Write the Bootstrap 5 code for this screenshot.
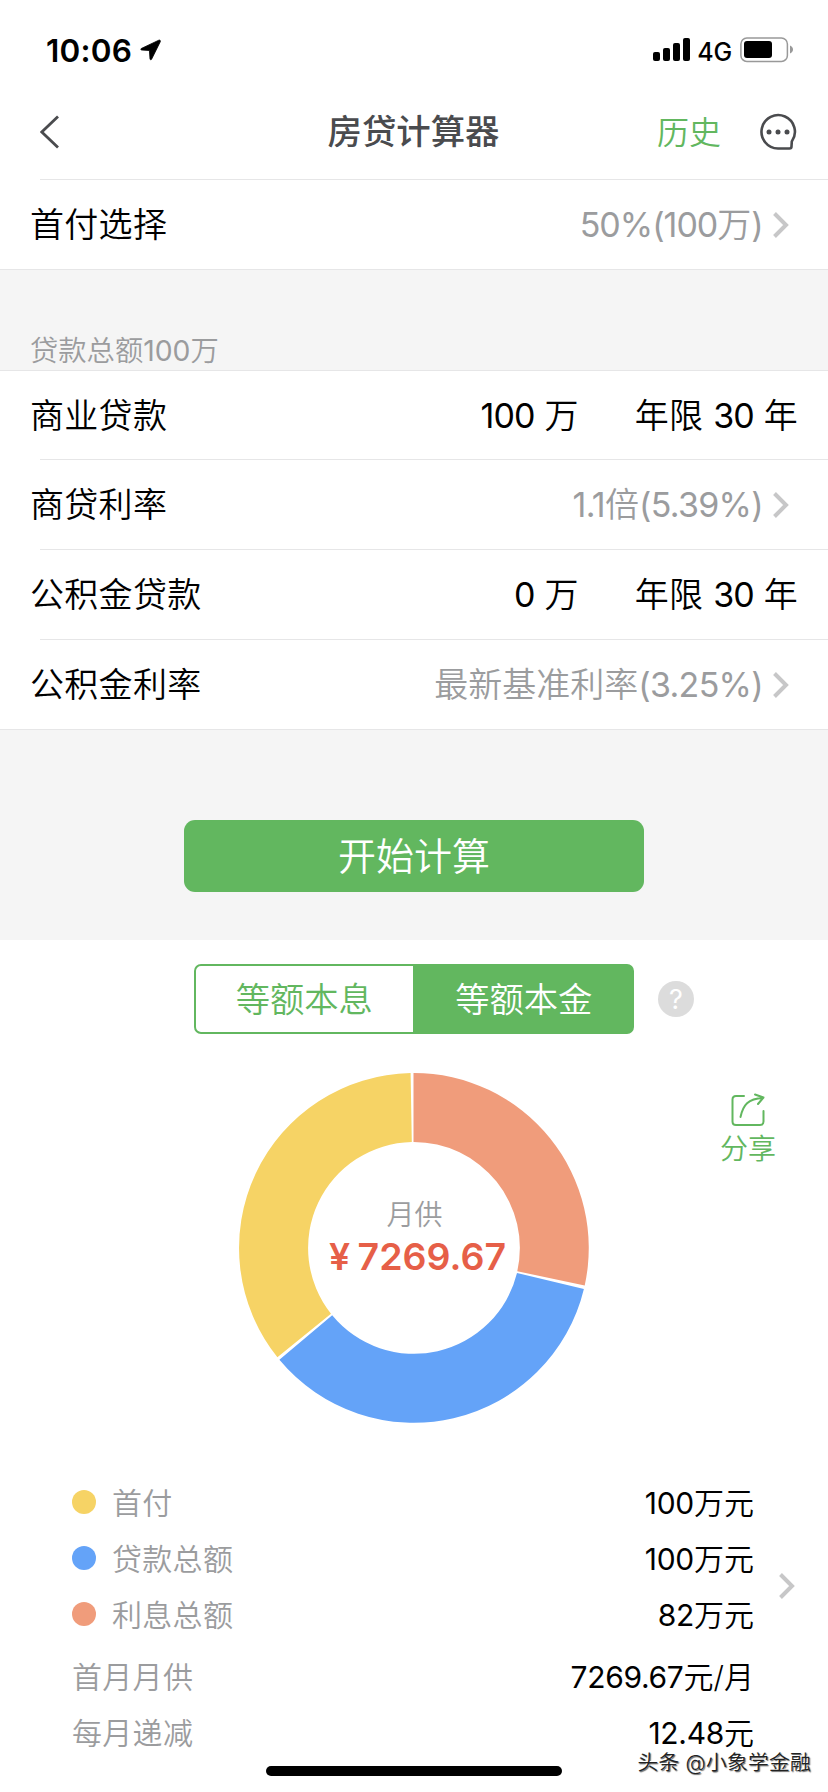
<!DOCTYPE html>
<html lang="zh-CN">
<head>
<meta charset="utf-8">
<meta name="viewport" content="width=device-width, initial-scale=1">
<title>房贷计算器</title>
<link href="https://cdn.jsdelivr.net/npm/bootstrap@5.3.0/dist/css/bootstrap.min.css" rel="stylesheet">
<style>
  :root { --green:#62b75f; --line:#e6e6e7; --grey:#9b9c9e; }
  body { font-family: Inter, "Noto Sans CJK SC", sans-serif; font-weight:350; font-size:34px; line-height:1; color:#000; background:#fff; overflow:hidden; }
  .screen { width:828px; height:1792px; overflow:hidden; }
  svg { display:block; flex:none; }
  .statusbar { height:88px; padding:20px 34px 8px 46px; }
  .clock { font-size:31.5px; font-weight:600; letter-spacing:.2px; padding-top:1px; }
  .network { font-size:25px; font-weight:500; letter-spacing:-.2px; padding-top:4px; margin-left:7px; }
  .titlebar { height:91px; padding:0 31px 4px 40px; }
  .titlebar h1 { font-size:34.4px; font-weight:500; color:#4a4b4e; line-height:1; left:0; right:1px; padding-top:2px; }
  .history { font-size:32px; color:var(--green); text-decoration:none; padding-top:2px; }
  .inset-line { height:1px; margin-left:40px; background:var(--line); }
  .item { height:89px; padding:1px 30px 0 30px; letter-spacing:.3px; }
  .item.first { height:88px; }
  .digits { font-weight:400; letter-spacing:-.9px; }
  .picked { color:var(--grey); margin-right:10px; letter-spacing:0; }
  .picked .digits { letter-spacing:-.7px; }
  .picked .pct { letter-spacing:-1px; }
  .arrowed { padding-right:39px; }
  .years { margin-left:56px; }
  .grey-band { background:#f5f5f5; }
  .band-head { height:102px; border-top:1px solid var(--line); border-bottom:1px solid var(--line); padding:0 30px 5px; font-size:28.300px; color:var(--grey); }
  .band-head .digits { letter-spacing:0; }
  .band-go { height:211px; border-top:1px solid var(--line); padding-top:90px; }
  .go { width:460px; height:72px; border-radius:11px; background:var(--green); color:#fff; font-size:38px; font-weight:350; line-height:1; padding:0; border:0; }
  .seg-row { padding:24px 134px 0 194px; }
  .seg { width:440px; height:70px; }
  .seg .btn { font-size:34.300px; font-weight:350; line-height:1; padding:2px 0 0; border:2px solid var(--green); border-radius:7px; color:var(--green); flex:1 1 0; }
  .seg .btn.active { background:var(--green); border-color:var(--green); color:#fff; }
  .help { width:36px; height:36px; background:#dcdcdc; color:#fff; font-size:27px; font-weight:400; margin-left:24px; }
  .chart-row { height:389px; padding-top:39px; }
  .chart-label { top:0; left:1px; right:0; bottom:0; padding-top:128px; }
  .chart-label small { font-size:28px; color:var(--grey); }
  .amount { font-size:37.500px; font-weight:600; letter-spacing:0; word-spacing:-2px; color:#e65f48; margin:9px 0 0 6px; }
  .share { right:52px; top:59px; font-size:28px; color:var(--green); gap:8px; }
  .legend { padding:51px 74px 0 72px; font-size:30px; }
  .legend-row { height:56px; padding-top:1px; }
  .legend-row.gapped { margin-top:6px; }
  .legend .digits { letter-spacing:-.3px; }
  .legend-name { color:var(--grey); letter-spacing:.3px; }
  .dot { width:24px; height:24px; margin:-1px 16px 0 0; }
  .more { right:33px; top:150px; }
  .homebar { left:266px; top:1766px; width:296px; height:10px; border-radius:5px; background:#000; }
  .credit { right:17px; top:1753px; font-size:20.8px; font-weight:350; color:#222; text-shadow:-1px -1px 0 #fff, 1px 1px 1px #666; white-space:nowrap; letter-spacing:.2px; }
</style>
</head>
<body>
<div class="screen position-relative">
  <div class="statusbar d-flex align-items-center">
    <span class="clock">10:06</span>
    <svg class="ms-2" width="21" height="22" viewBox="0 0 21 22"><path d="M18.800 1.200 1.300 9.500c-.8.5-.6 1.400.3 1.500l7.800.5.6 8.500c.2 1 1.200 1 1.600.2L20.300 2.700c.4-1-.4-2-1.500-1.500z" stroke="#000" stroke-width=".8"/></svg>
    <svg class="ms-auto" width="37" height="24" viewBox="0 0 37 24"><rect x="0" y="14" width="7" height="9" rx="2"/><rect x="10" y="10" width="7" height="13" rx="2"/><rect x="20" y="5" width="7" height="18" rx="2"/><rect x="30" y="0" width="7" height="23" rx="2"/></svg>
    <span class="network">4G</span>
    <svg class="ms-2" width="54" height="26" viewBox="0 0 54 26"><rect x=".9" y=".9" width="46.500" height="23.500" rx="6" fill="none" stroke="#999" stroke-width="1.500"/><rect x="4" y="4" width="28" height="17" rx="3"/><path d="M50 8.500c4 1.500 4 6.500 0 8z" fill="#999"/></svg>
  </div>
  <div class="titlebar d-flex align-items-center position-relative">
    <svg width="20" height="34" viewBox="0 0 20 34"><path d="M18 1.500 1.800 17 18 32.500" fill="none" stroke="#4a4b4e" stroke-width="2.800"/></svg>
    <h1 class="position-absolute text-center m-0">房贷计算器</h1>
    <a class="history ms-auto position-relative">历史</a>
    <svg style="margin-left:38px" width="38" height="38" viewBox="0 0 38 38"><path d="M32.800 28.500A16.700 16.700 0 1 0 19 35.500h11.500q2 0 2-2z" fill="none" stroke="#4a4b4e" stroke-width="2.600" stroke-linejoin="round"/><g fill="#4a4b4e"><circle cx="10" cy="19" r="2.500"/><circle cx="19" cy="19" r="2.500"/><circle cx="28" cy="19" r="2.500"/></g></svg>
  </div>
  <div class="inset-line"></div>
  <div class="item arrowed d-flex align-items-center"><span>首付选择</span><span class="picked ms-auto"><span class="digits pct">50%(100</span>万<span class="digits">)</span></span><svg width="16" height="26" viewBox="0 0 16 26"><path d="M1.500 1.500 13 13 1.500 24.500" fill="none" stroke="#c7c7c8" stroke-width="4"/></svg></div>
  <div class="grey-band band-head d-flex align-items-end"><span>贷款总额<span class="digits">100</span>万</span></div>
  <div class="item first d-flex align-items-center"><span>商业贷款</span><span class="ms-auto text-nowrap"><span class="digits">100</span> 万</span><span class="years text-nowrap">年限 <span class="digits">30</span> 年</span></div>
  <div class="inset-line"></div>
  <div class="item arrowed d-flex align-items-center"><span>商贷利率</span><span class="picked ms-auto"><span class="digits">1.1</span>倍<span class="digits">(5.39%)</span></span><svg width="16" height="26" viewBox="0 0 16 26"><path d="M1.500 1.500 13 13 1.500 24.500" fill="none" stroke="#c7c7c8" stroke-width="4"/></svg></div>
  <div class="inset-line"></div>
  <div class="item d-flex align-items-center"><span>公积金贷款</span><span class="ms-auto text-nowrap"><span class="digits">0</span> 万</span><span class="years text-nowrap">年限 <span class="digits">30</span> 年</span></div>
  <div class="inset-line"></div>
  <div class="item arrowed d-flex align-items-center"><span>公积金利率</span><span class="picked ms-auto">最新基准利率<span class="digits">(3.25%)</span></span><svg width="16" height="26" viewBox="0 0 16 26"><path d="M1.500 1.500 13 13 1.500 24.500" fill="none" stroke="#c7c7c8" stroke-width="4"/></svg></div>
  <div class="grey-band band-go text-center"><button class="btn go">开始计算</button></div>

  <div class="seg-row d-flex align-items-center">
    <div class="btn-group seg"><button class="btn">等额本息</button><button class="btn active">等额本金</button></div>
    <span class="help rounded-circle d-flex align-items-center justify-content-center">?</span>
  </div>
  <div class="chart-row d-flex justify-content-center position-relative">
    <div class="position-relative">
      <svg width="350" height="350" viewBox="-175 -175 350 350">
        <path fill="#f09c7b" d="M-.5-175A175 175 0 0 1 170.700 37.500L103.300 23.200A106 106 0 0 0-.5-106z"/>
        <path fill="#64a3f8" d="M169.900 40.900A175 175 0 0 1-134.600 111.800L-81.800 67.200A106 106 0 0 0 103 25z"/>
        <path fill="#f6d365" d="M-136.600 109.300A175 175 0 0 1-3.400-175L-2.200-106A106 106 0 0 0-83 65.800z"/>
      </svg>
      <div class="chart-label position-absolute d-flex flex-column align-items-center"><small>月供</small><span class="amount text-nowrap">¥ 7269.67</span></div>
    </div>
    <div class="share position-absolute d-flex flex-column align-items-center">
      <svg width="34" height="34" viewBox="0 0 34 34" fill="none" stroke="#62b75f" stroke-width="2" stroke-linecap="round" stroke-linejoin="round"><path d="M13 3H5Q1.500 3 1.500 6.500v22Q1.500 32 5 32h24q3.500 0 3.500-3.500V18M9.500 24C12 12 17 5.500 32 5M24 1.500 32.500 4.500 27 11"/></svg>
      <span>分享</span>
    </div>
  </div>
  <div class="legend position-relative">
    <div class="legend-row d-flex align-items-center"><span class="dot rounded-circle" style="background:#f6d365"></span><span class="legend-name">首付</span><span class="ms-auto"><span class="digits">100</span>万元</span></div>
    <div class="legend-row d-flex align-items-center"><span class="dot rounded-circle" style="background:#64a3f8"></span><span class="legend-name">贷款总额</span><span class="ms-auto"><span class="digits">100</span>万元</span></div>
    <div class="legend-row d-flex align-items-center"><span class="dot rounded-circle" style="background:#f09c7b"></span><span class="legend-name">利息总额</span><span class="ms-auto"><span class="digits">82</span>万元</span></div>
    <div class="legend-row gapped d-flex align-items-center"><span class="legend-name">首月月供</span><span class="ms-auto"><span class="digits">7269.67</span>元/月</span></div>
    <div class="legend-row d-flex align-items-center"><span class="legend-name">每月递减</span><span class="ms-auto"><span class="digits">12.48</span>元</span></div>
    <svg class="more position-absolute" width="16" height="26" viewBox="0 0 16 26"><path d="M1.500 1.500 13 13 1.500 24.500" fill="none" stroke="#c7c7c8" stroke-width="4"/></svg>
  </div>
  <div class="homebar position-absolute"></div>
  <div class="credit position-absolute">头条 @小象学金融</div>
</div>
<script src="https://cdn.jsdelivr.net/npm/bootstrap@5.3.0/dist/js/bootstrap.bundle.min.js"></script>
</body>
</html>
